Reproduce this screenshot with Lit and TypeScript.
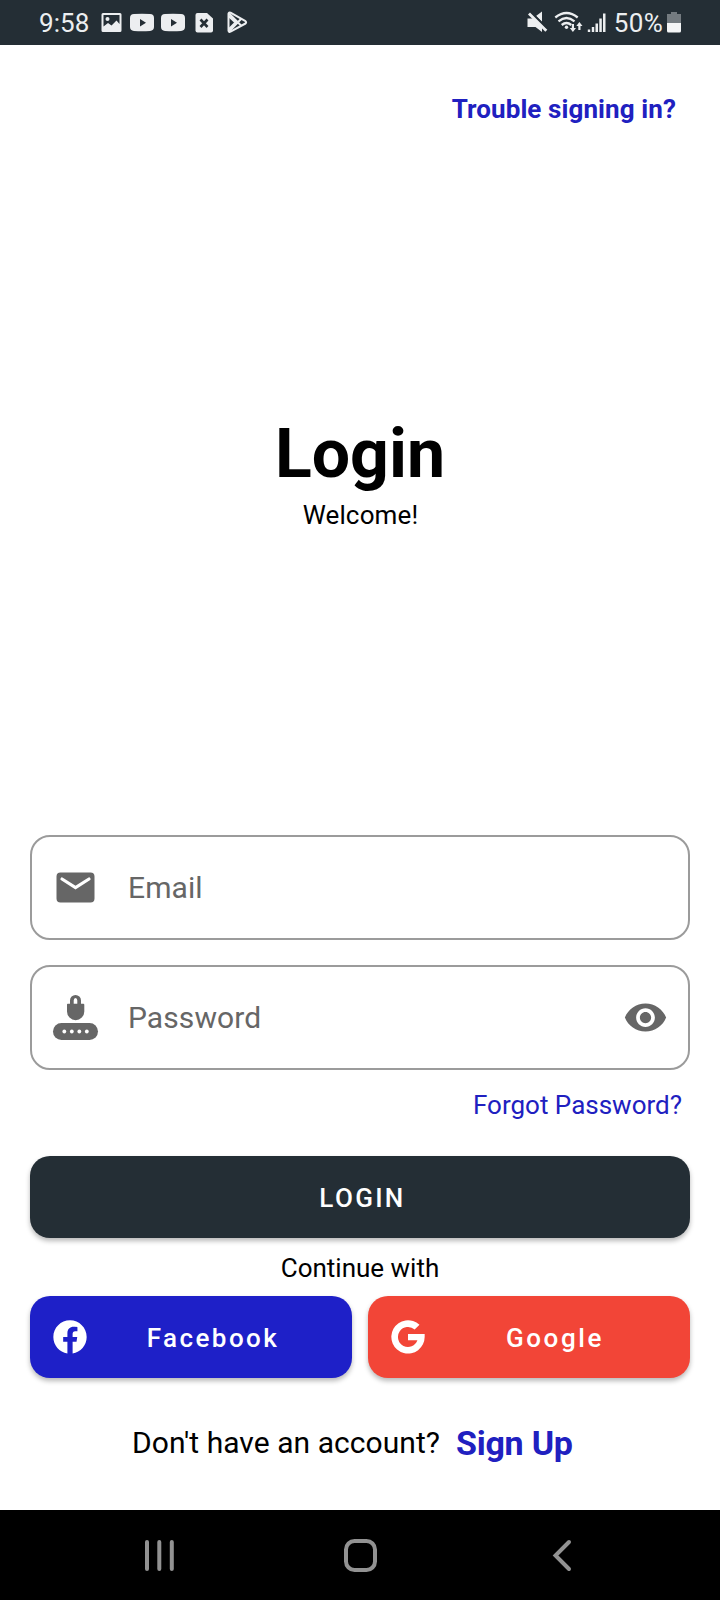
import { LitElement, html, css, svg } from "lit";
import { customElement, property } from "lit/decorators.js";

@customElement("status-bar")
export class StatusBar extends LitElement {
  static styles = css`
    :host { display: flex; height: 45px; background: #242e35; color: #eceef0;
      font: 26px/34px Roboto, sans-serif; box-sizing: border-box; padding: 6px 38px 0 39px; justify-content: space-between; }
    .side { display: flex; align-items: flex-start; }
    .time { width: 62px; letter-spacing: 0.1px; }
    .pct { letter-spacing: 0.3px; margin-right: 1px; }
    svg { display: block; }
  `;
  render() {
    return html`
      <div class="side">
        <span class="time">9:58</span>
        <svg width="147" height="34" viewBox="101 6 147 34" fill="#eceef0">
          <path fill-rule="evenodd" d="M103 13h17a1.500 1.500 0 0 1 1.500 1.500v16a1.500 1.500 0 0 1-1.500 1.500h-17a1.500 1.500 0 0 1-1.500-1.500v-16a1.500 1.500 0 0 1 1.500-1.500zM103.500 15v11.500l4.500-3.500 3.500 2.500 5-5 3 3.500V15z"/>
          <circle cx="107.500" cy="19" r="2"/>
          <path fill-rule="evenodd" d="M134 14q8-.6 16 0q4 .2 4 4v9q0 3.600-4 4q-8 .6-16 0q-4-.4-4-4v-9q0-3.800 4-4zM140 19v7.500l6-3.700z"/>
          <path fill-rule="evenodd" d="M165 14q8-.6 16 0q4 .2 4 4v9q0 3.600-4 4q-8 .6-16 0q-4-.4-4-4v-9q0-3.800 4-4zM171 19v7.500l6-3.700z"/>
          <path d="M197.500 13h9.500l6 5.500v12a2 2 0 0 1-2 2h-13.500a2 2 0 0 1-2-2v-15.500a2 2 0 0 1 2-2z"/>
          <path d="M200.500 19.500l7 7.500M207.500 19.500l-7 7.500" stroke="#242e35" stroke-width="2.600"/>
          <g fill="none" stroke="#eceef0" stroke-width="2" stroke-linejoin="round">
            <path d="M228.500 13.700v17q.3 1.800 2 1l15-8.200q1.300-1.200 0-2.300l-15-8.500q-1.700-.6-2 1z"/>
            <path d="M229 13.500l12.500 12.500M229 31.500l12.500-13M228.500 16l7 6.500-7 7"/>
          </g>
        </svg>
      </div>
      <div class="side">
        <svg width="87" height="34" viewBox="527 6 87 34" fill="#eceef0">
          <path d="M536 16l6-4.500v10.500z"/>
          <path d="M527.500 18.500h6l8.500 8v5.500l-6.500-5h-8z"/>
          <path d="M529 13.500l17.300 17.300" stroke="#eceef0" stroke-width="2.800"/>
          <path d="M531 11.800l17 17" stroke="#242e35" stroke-width="1.400"/>
          <g fill="none" stroke="#eceef0" stroke-width="2.300">
            <path d="M555.300 17.500q11.200-9 22.400 0M558.500 21.300q8-6.500 16 0M561.700 25q4.800-4 9.600 0"/>
          </g>
          <circle cx="566.500" cy="27.300" r="1.700"/>
          <path d="M571.800 24h2.200v4h2l-3.100 4-3.100-4h2zM578.300 30h2.200v-4h2l-3.100-4-3.100 4h2z"/>
          <path d="M587.800 29.500h2.400v2.500h-2.400zM591.800 27h2.400v5h-2.400zM595.500 23.500h2.500v8.500h-2.500zM599.300 18.500h2.500v13.500h-2.500zM603 13.500h2.500v18.500h-2.500z"/>
        </svg>
        <span class="pct">50%</span>
        <svg width="18" height="34" viewBox="664 6 18 34">
          <path d="M671 12h6v2h4v9h-14v-9h4z" fill="#747b80"/>
          <path d="M667 23h14v8a1.500 1.500 0 0 1-1.500 1.500h-11a1.500 1.500 0 0 1-1.500-1.500z" fill="#f4f5f6"/>
        </svg>
      </div>`;
  }
}

@customElement("text-field")
export class TextField extends LitElement {
  static styles = css`
    :host { display: flex; align-items: center; box-sizing: border-box; height: 105px; border: 2px solid #9b9b9b;
      border-radius: 20px; color: #666; font: 30px/40px Roboto, sans-serif; padding: 1px 20px 0 20px; }
    .label { flex: 1; margin-left: 28px; letter-spacing: 0.1px; }
    svg { display: block; fill: #666; }
    .eye { margin-top: -2px; }
  `;
  @property() label = "";
  @property() icon = "";

  render() {
    return html`
      <svg width="48" height="48" viewBox="0 0 48 48">
        ${this.icon === "mail"
          ? svg`<path d="M8.500 8.500h30a4 4 0 0 1 4 4v22a4 4 0 0 1-4 4h-30a4 4 0 0 1-4-4v-22a4 4 0 0 1 4-4z"/><path d="M10 15l13.500 8.500L37 15" fill="none" stroke="#fff" stroke-width="3.200" stroke-linecap="round"/>`
          : svg`<path fill-rule="evenodd" d="M15.700 9.700h2.300V6.500a5.500 5.500 0 0 1 11 0v3.200h2.300a1 1 0 0 1 1 1v6.800a8.650 8.650 0 0 1-17.300 0v-6.800a1 1 0 0 1 .7-1zM21.700 9.700h3.600V6.500a1.800 2.500 0 0 0-3.600 0z"/><rect x="1" y="29" width="45" height="17" rx="8.500"/><g fill="#fff"><circle cx="12.300" cy="37.500" r="1.900"/><circle cx="19.800" cy="37.500" r="1.900"/><circle cx="27.300" cy="37.500" r="1.900"/><circle cx="34.800" cy="37.500" r="1.900"/></g>`}
      </svg>
      <span class="label">${this.label}</span>
      ${this.icon === "mail" ? "" : html`
        <svg class="eye" width="45" height="45" viewBox="0 0 24 24"><path d="M12 4.500C7 4.500 2.730 7.610 1 12c1.730 4.390 6 7.500 11 7.500s9.270-3.110 11-7.500c-1.730-4.390-6-7.500-11-7.500zM12 17c-2.760 0-5-2.240-5-5s2.240-5 5-5 5 2.240 5 5-2.240 5-5 5zm0-8c-1.660 0-3 1.340-3 3s1.340 3 3 3 3-1.340 3-3-1.340-3-3-3z"/></svg>`}
    `;
  }
}

@customElement("app-root")
export class AppRoot extends LitElement {
  static styles = css`
    :host { display: flex; flex-direction: column; height: 1600px; background: #fff; color: #000;
      font: 26px/34px Roboto, sans-serif; overflow: hidden; }
    main { flex: 1; display: flex; flex-direction: column; padding: 46px 30px 0; }
    .link { color: #2020c0; }
    .trouble { align-self: flex-end; font-weight: 700; line-height: 36px; margin-right: 14px; letter-spacing: 0.1px; }
    h1 { margin: 287px 0 0; font-size: 68px; line-height: 80px; text-align: center; }
    .welcome { text-align: center; margin-top: 4px; padding-left: 1px; letter-spacing: 0.15px; }
    .fields { display: flex; flex-direction: column; gap: 25px; margin-top: 303px; }
    .forgot { align-self: flex-end; margin: 18px 8px 0 0; }
    .button { display: flex; align-items: center; justify-content: center; box-sizing: border-box; height: 82px;
      border-radius: 20px; color: #fff; font-weight: 500; letter-spacing: 2.320px; padding-top: 2px;
      box-shadow: 0 3px 5px rgba(0, 0, 0, 0.28); }
    .login { background: #242e35; margin-top: 34px; padding-left: 5px; }
    .continue { text-align: center; margin: 13px 0 11px; }
    .social { display: grid; grid-template-columns: 1fr 1fr; gap: 16px; }
    .social .button { padding: 2px 16px 0 20px; letter-spacing: 2.450px; }
    .social .google { padding-right: 8px; letter-spacing: 2.600px; }
    .social span { flex: 1; text-align: center; }
    .social svg { margin-top: -3px; fill: #fff; }
    .facebook { background: #1e20c8; }
    .google { background: #f24537; }
    .signup { display: flex; margin: 45px 0 0 102px; font-size: 30px; line-height: 40px; gap: 16px; letter-spacing: 0.05px; }
    .signup .link { font-size: 34px; font-weight: 700; letter-spacing: -0.25px; }
    nav { height: 90px; background: #000; }
    nav svg { display: block; }
  `;
  render() {
    return html`
      <status-bar></status-bar>
      <main>
        <span class="link trouble">Trouble signing in?</span>
        <h1>Login</h1>
        <div class="welcome">Welcome!</div>
        <div class="fields">
          <text-field icon="mail" label="Email"></text-field>
          <text-field icon="password" label="Password"></text-field>
        </div>
        <span class="link forgot">Forgot Password?</span>
        <div class="button login">LOGIN</div>
        <div class="continue">Continue with</div>
        <div class="social">
          <div class="button facebook">
            <svg width="40" height="40" viewBox="0 0 24 24"><path d="M22 12c0-5.520-4.480-10-10-10S2 6.480 2 12c0 4.990 3.660 9.130 8.440 9.880V14.900H7.900V12h2.540V9.800c0-2.510 1.490-3.900 3.780-3.900 1.100 0 2.240.2 2.240.2v2.460h-1.260c-1.240 0-1.630.77-1.630 1.560V12h2.780l-.45 2.900h-2.330v6.980C18.340 21.130 22 16.990 22 12z"/></svg>
            <span>Facebook</span>
          </div>
          <div class="button google">
            <svg width="40" height="40" viewBox="0 0 24 24"><path d="M12 10.200v3.800h5.650A6 6 0 1 1 16 7.530L18.900 4.700A10 10 0 1 0 22 12v-1.800z"/></svg>
            <span>Google</span>
          </div>
        </div>
        <div class="signup"><span>Don't have an account?</span><span class="link">Sign Up</span></div>
      </main>
      <nav>
        <svg width="720" height="90" viewBox="0 1510 720 90" fill="none" stroke="#929292" stroke-width="4" stroke-linecap="round">
          <path d="M147 1542v27M159.300 1542v27M171.800 1542v27"/>
          <rect x="346" y="1541" width="29" height="29" rx="8.500"/>
          <path d="M569 1542l-13.500 13.500 13.500 13.500"/>
        </svg>
      </nav>`;
  }
}
